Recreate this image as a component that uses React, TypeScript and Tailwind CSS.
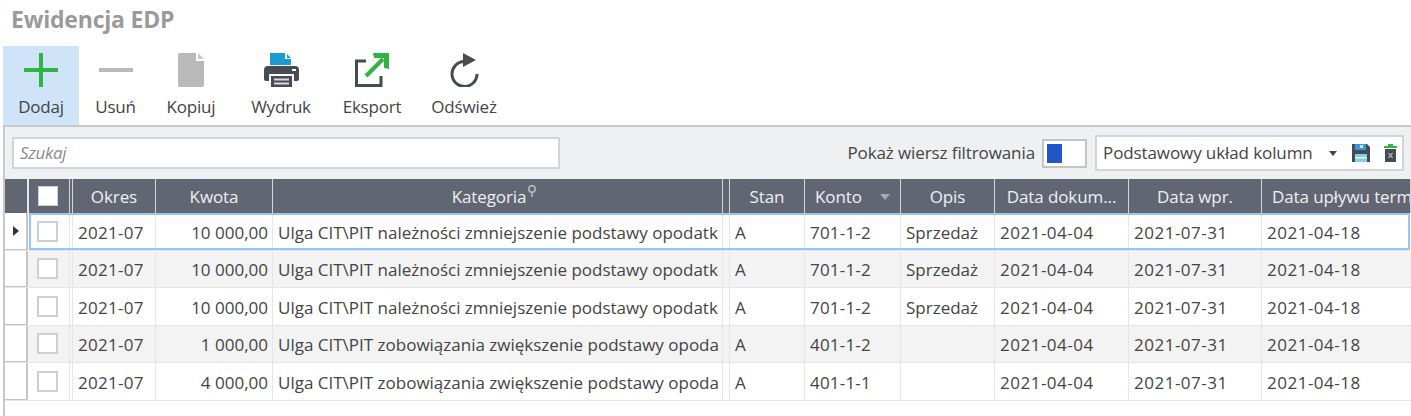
import { ReactNode } from "react";

const font = "font-['Open_Sans',sans-serif]";

const columns = [
  { label: "Okres", width: "w-[83px]" },
  { label: "Kwota", width: "w-[117px]" },
  { label: "Kategoria", width: "w-[450px]" },
  { label: "", width: "w-[7px]" },
  { label: "Stan", width: "w-[75px]" },
  { label: "Konto", width: "w-[96px]" },
  { label: "Opis", width: "w-[94px]" },
  { label: "Data dokum...", width: "w-[134px]" },
  { label: "Data wpr.", width: "w-[133px]" },
  { label: "Data upływu term", width: "flex-1" },
];

const rows = [
  { kwota: "10 000,00", kat: "Ulga CIT\\PIT należności zmniejszenie podstawy opodatk", konto: "701-1-2", opis: "Sprzedaż" },
  { kwota: "10 000,00", kat: "Ulga CIT\\PIT należności zmniejszenie podstawy opodatk", konto: "701-1-2", opis: "Sprzedaż" },
  { kwota: "10 000,00", kat: "Ulga CIT\\PIT należności zmniejszenie podstawy opodatk", konto: "701-1-2", opis: "Sprzedaż" },
  { kwota: "1 000,00", kat: "Ulga CIT\\PIT zobowiązania zwiększenie podstawy opoda", konto: "401-1-2", opis: "" },
  { kwota: "4 000,00", kat: "Ulga CIT\\PIT zobowiązania zwiększenie podstawy opoda", konto: "401-1-1", opis: "" },
];

function ToolButton({ label, width, active, children }: { label: string; width: string; active?: boolean; children: ReactNode }) {
  return (
    <div className={`${width} flex flex-col items-center ${active ? "bg-[#cfe4f8]" : ""}`}>
      <div className="h-[41px] flex items-end justify-center">{children}</div>
      <span className="mt-[10px] text-[17px] leading-[20px] tracking-[-0.2px] text-[#444]">{label}</span>
    </div>
  );
}

function Toolbar() {
  return (
    <div className="flex h-[79px] pl-[3px]">
      <ToolButton label="Dodaj" width="w-[76px]" active>
        <svg width="34" height="34" viewBox="0 0 34 34"><path d="M17 0v34M0 17h34" stroke="#2fb344" strokeWidth="4" fill="none" /></svg>
      </ToolButton>
      <ToolButton label="Usuń" width="w-[73px]">
        <svg width="34" height="34" viewBox="0 0 34 34"><path d="M0 17h34" stroke="#b9b9b9" strokeWidth="4" fill="none" /></svg>
      </ToolButton>
      <ToolButton label="Kopiuj" width="w-[78px]">
        <svg width="26" height="34" viewBox="0 0 26 34">
          <path d="M2 0h16v8h8v24a2 2 0 0 1-2 2H2a2 2 0 0 1-2-2V2a2 2 0 0 1 2-2z" fill="#b9b9b9" />
          <path d="M20 0l6 6h-6z" fill="#c9c9c9" />
        </svg>
      </ToolButton>
      <ToolButton label="Wydruk" width="w-[102px]">
        <svg width="35" height="34" viewBox="0 0 35 34">
          <path d="M6 0h15v6h6v6H6z" fill="#1d9bd1" />
          <path d="M23 1l4 4h-4z" fill="#1d9bd1" />
          <path d="M4 13h27a4 4 0 0 1 4 4v9a2 2 0 0 1-2 2h-3v-7H5v7H2a2 2 0 0 1-2-2V17a4 4 0 0 1 4-4z" fill="#474c53" />
          <path d="M7 23h21v11H7z" fill="#474c53" />
          <path d="M10 25.500h15v2H10zM10 29.500h15v2H10z" fill="#d8dadc" />
          <path d="M28 16h4v2h-4z" fill="#fff" />
        </svg>
      </ToolButton>
      <ToolButton label="Eksport" width="w-[80px]">
        <svg width="35" height="34" viewBox="0 0 35 34">
          <path d="M11 8H1.500v24.500H26V23" stroke="#474c53" strokeWidth="3" fill="none" />
          <path d="M11 23L28 6" stroke="#2fb344" strokeWidth="4" fill="none" />
          <path d="M18 0h16v16l-5-1V5H19z" fill="#2fb344" />
        </svg>
      </ToolButton>
      <ToolButton label="Odśwież" width="w-[104px]">
        <svg width="31" height="34" viewBox="0 0 31 34">
          <path d="M15 8.500A12.500 12.500 0 1 0 28 21" stroke="#474c53" strokeWidth="3" fill="none" />
          <path d="M14 0l13 7-13 7z" fill="#474c53" />
        </svg>
      </ToolButton>
    </div>
  );
}

function FilterBar() {
  return (
    <div className="h-[52px] flex items-center pl-[7px] pr-[7px]">
      <div className="w-[548px] h-[32px] bg-white border-2 border-[#d4d4d4] flex items-center pl-[6px] text-[17px] italic tracking-[-0.3px] text-[#8a8a8a]">
        Szukaj
      </div>
      <span className="ml-auto text-[17px] tracking-[-0.1px] text-[#444]">Pokaż wiersz filtrowania</span>
      <div className="ml-[7px] w-[45px] h-[29px] bg-white border-2 border-[#c4c4c4] p-[3px]">
        <div className="w-[15px] h-full bg-[#2255c8]" />
      </div>
      <div className="ml-[8px] w-[309px] h-[36px] bg-white border-2 border-[#d4d4d4] flex items-center pl-[6px] relative">
        <span className="w-[212px] shrink-0 whitespace-nowrap text-[17px] tracking-[-0.1px] text-[#444]">Podstawowy układ kolumn</span>
        <svg className="ml-[14px]" width="8" height="5" viewBox="0 0 8 5"><path d="M0 0h8L4 5z" fill="#444" /></svg>
        <svg className="ml-[15px]" width="18" height="18" viewBox="0 0 18 18">
          <path d="M0 0h15l3 3v15H0z" fill="#474c53" />
          <path d="M3 0h11v6H3z" fill="#2f9fd6" />
          <path d="M8 1h3v3H8z" fill="#cfe6f2" />
          <path d="M3 10h12v8H3z" fill="#7fd0ec" />
          <path d="M3 13h12v1.500H3z" fill="#e6f5fb" />
        </svg>
        <svg className="ml-[14px]" width="13" height="18" viewBox="0 0 13 18">
          <path d="M4 0h5v2h4v2H0V2h4z" fill="#2fb344" />
          <path d="M1 5h11v13H1z" fill="#474c53" />
          <path d="M4.500 9l4 5m0-5l-4 5" stroke="#c8c8c8" strokeWidth="1.200" />
        </svg>
      </div>
    </div>
  );
}

function HeaderRow() {
  return (
    <div className="flex h-[34px] bg-[#626672] text-[#eef0f2] text-[17px] tracking-[-0.1px]">
      <div className="w-[22px] shrink-0" />
      <div className="w-[2px] shrink-0 bg-[#e6e7ea]" />
      <div className="w-[41px] shrink-0 flex items-center justify-center pr-[2px] border-r border-[#d4d5d9]">
        <div className="w-[20px] h-[20px] bg-white border border-[#d0d0d0]" />
      </div>
      <div className="w-[3px] shrink-0 border-r border-[#d4d5d9]" />
      {columns.map((col) => (
        <div
          key={col.label || "gap"}
          className={`${col.width} shrink-0 min-w-0 overflow-hidden whitespace-nowrap border-r border-[#d4d5d9] flex items-center pt-[1px] ${col.width === "flex-1" ? "pl-[10px]" : "justify-center"} ${col.label === "Kategoria" ? "pr-[6px]" : ""}`}
        >
          {col.label}
          {col.label === "Kategoria" && (
            <svg className="ml-[1px] -mt-[11px]" width="10" height="12" viewBox="0 0 10 12">
              <circle cx="5" cy="4" r="3.200" stroke="#b8bbc2" strokeWidth="1.500" fill="none" />
              <path d="M5 7v5" stroke="#b8bbc2" strokeWidth="1.500" />
            </svg>
          )}
          {col.label === "Konto" && (
            <svg className="ml-[18px]" width="10" height="6" viewBox="0 0 10 6"><path d="M0 0h10L5 6z" fill="#a8abb3" /></svg>
          )}
        </div>
      ))}
    </div>
  );
}

function Cell({ width, className, children }: { width: string; className?: string; children?: ReactNode }) {
  return (
    <div className={`${width} shrink-0 min-w-0 overflow-hidden whitespace-nowrap border-r border-[#e6e6e6] flex items-center px-[5px] pt-[2px] ${className ?? ""}`}>
      {children}
    </div>
  );
}

function DataRow({ row, index }: { row: (typeof rows)[number]; index: number }) {
  const selected = index === 0;
  return (
    <div className={`relative flex h-[37.5px] text-[17px] text-[#444] border-b border-[#e6e6e6] ${index % 2 === 1 ? "bg-[#f3f3f3]" : "bg-white"}`}>
      <div className="w-[23px] shrink-0 bg-white border-r-2 border-b border-[#c4c4c4] flex items-center justify-center">
        {selected && (
          <svg width="6" height="10" viewBox="0 0 6 10"><path d="M0 0l6 5-6 5z" fill="#333" /></svg>
        )}
      </div>
      <div className="w-[42px] shrink-0 flex items-center justify-center pr-[2px] border-r border-[#e6e6e6]">
        <div className="w-[21px] h-[21px] bg-white border-2 border-[#cfcfcf]" />
      </div>
      <div className="w-[3px] shrink-0 border-r border-[#e6e6e6]" />
      <Cell width="w-[83px]" className="tracking-[0.3px]">2021-07</Cell>
      <Cell width="w-[117px]" className="justify-end !pr-[4px]">{row.kwota}</Cell>
      <Cell width="w-[450px]" className="!pr-[2px]">
        <span className="block w-[442px] overflow-hidden">{row.kat}</span>
      </Cell>
      <Cell width="w-[7px]" className="!px-0" />
      <Cell width="w-[75px]">A</Cell>
      <Cell width="w-[96px]" className="tracking-[0.2px]">{row.konto}</Cell>
      <Cell width="w-[94px]">{row.opis}</Cell>
      <Cell width="w-[134px]" className="tracking-[0.5px]">2021-04-04</Cell>
      <Cell width="w-[133px]" className="tracking-[0.5px]">2021-07-31</Cell>
      <Cell width="flex-1" className="border-r-0 tracking-[0.5px]">2021-04-18</Cell>
      {selected && <div className="absolute left-[24px] right-[1px] top-0 bottom-0 border-2 border-[#93c8ef]" />}
    </div>
  );
}

export default function App() {
  return (
    <div className={`${font} w-[1411px] h-[416px] overflow-hidden bg-white`}>
      <div className="h-[46px] pl-[11px] pt-[6px] text-[23px] leading-[26px] font-bold tracking-[-0.2px] text-[#9a9a9a]">
        Ewidencja EDP
      </div>
      <Toolbar />
      <div className="ml-[3px] h-[291px] border-t-2 border-l-2 border-[#c8c8c8] bg-white">
        <div className="bg-[#eef0f1]">
          <FilterBar />
        </div>
        <HeaderRow />
        {rows.map((row, i) => (
          <DataRow key={i} row={row} index={i} />
        ))}
      </div>
    </div>
  );
}
